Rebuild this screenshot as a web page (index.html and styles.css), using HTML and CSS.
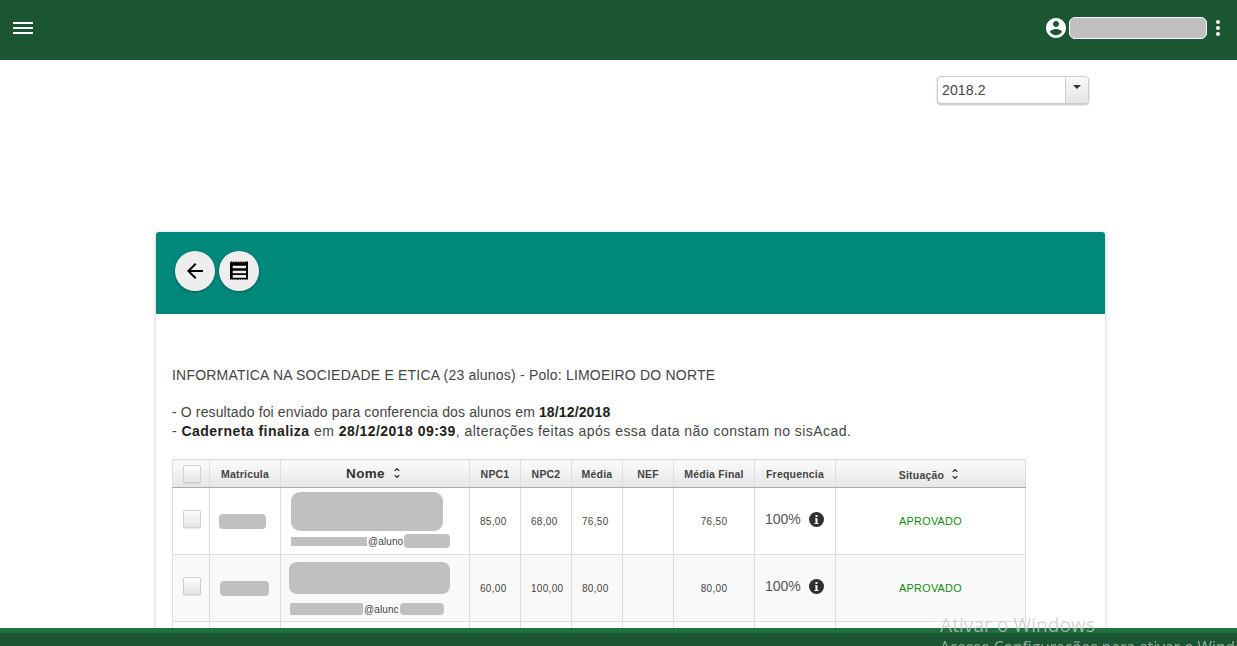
FILE: index.html
```html
<!DOCTYPE html>
<html lang="pt-BR">
<head>
<meta charset="utf-8">
<title>Caderneta</title>
<link rel="stylesheet" href="styles.css">
</head>
<body>
<header class="topbar">
  <svg class="menu-icon" width="20" height="12" viewBox="0 0 20 12"><path fill="#fff" d="M0 0h20v2H0zM0 5h20v2H0zM0 10h20v2H0z"/></svg>
  <div class="user">
    <svg width="24" height="24" viewBox="0 0 24 24"><path fill="#fff" d="M12 2C6.48 2 2 6.48 2 12s4.48 10 10 10 10-4.48 10-10S17.52 2 12 2zm0 3c1.66 0 3 1.34 3 3s-1.34 3-3 3-3-1.34-3-3 1.34-3 3-3zm0 14.2c-2.5 0-4.71-1.28-6-3.22.03-1.99 4-3.08 6-3.08 1.99 0 5.97 1.09 6 3.08-1.29 1.94-3.5 3.22-6 3.22z"/></svg>
    <span class="user-blob"></span>
    <svg width="24" height="24" viewBox="0 0 24 24"><path fill="#fff" d="M12 8c1.1 0 2-.9 2-2s-.9-2-2-2-2 .9-2 2 .9 2 2 2zm0 2c-1.1 0-2 .9-2 2s.9 2 2 2 2-.9 2-2-.9-2-2-2zm0 6c-1.1 0-2 .9-2 2s.9 2 2 2 2-.9 2-2-.9-2-2-2z"/></svg>
  </div>
</header>

<main class="page">
  <div class="period-row">
    <div class="select">
      <span class="select-value">2018.2</span>
      <span class="select-btn"><i class="caret"></i></span>
    </div>
  </div>

  <section class="card">
    <div class="card-head">
      <button class="fab" type="button" aria-label="Voltar">
        <svg width="24" height="24" viewBox="0 0 24 24"><path d="M20 11H7.83l5.59-5.59L12 4l-8 8 8 8 1.41-1.41L7.83 13H20v-2z"/></svg>
      </button>
      <button class="fab" type="button" aria-label="Caderneta">
        <svg width="24" height="24" viewBox="0 0 24 24"><path d="M3 3.2h.9v-.6h1.2v.6h1.2v-.6h1.2v.6h1.2v-.6h1.2v.6h1.2v-.6h1.2v.6h1.2v-.6h1.2v.6h1.2v-.6h1.2v.6h1.2v-.6H21v18.2h-.9v-.6h-1.2v.6h-1.2v-.6h-1.2v.6h-1.2v-.6h-1.2v.6h-1.2v-.6h-1.2v.6H9.5v-.6H8.3v.6H7.100v-.6H5.900v.6H4.700v-.6H3.500v.6H3z"/><path fill="#eee" d="M5.700 6.700H19v2.600H5.700zM5.700 11.700H19v2.600H5.700zM5.700 16H19v2.700H5.700z"/></svg>
      </button>
    </div>

    <div class="card-body">
      <p class="title">INFORMATICA NA SOCIEDADE E ETICA (23 alunos) - Polo: LIMOEIRO DO NORTE</p>
      <p class="notes">- O resultado foi enviado para conferencia dos alunos em <b>18/12/2018</b><br><span class="wide">- <b>Caderneta finaliza</b> em <b>28/12/2018 09:39</b>, alterações feitas após essa data não constam no sisAcad.</span></p>

      <table class="grades">
        <colgroup>
          <col class="c-check"><col class="c-mat"><col class="c-name"><col class="c-n"><col class="c-n"><col class="c-n"><col class="c-n"><col class="c-final"><col class="c-freq"><col class="c-sit">
        </colgroup>
        <thead>
          <tr>
            <th><span class="check"></span></th>
            <th>Matricula</th>
            <th class="th-name">Nome <svg class="sort" width="14" height="14" viewBox="0 0 24 24"><path d="M12 5.83L15.17 9l1.41-1.41L12 3 7.41 7.59 8.83 9 12 5.83zm0 12.34L8.83 15l-1.41 1.41L12 21l4.59-4.59L15.17 15 12 18.17z"/></svg></th>
            <th>NPC1</th>
            <th>NPC2</th>
            <th>Média</th>
            <th>NEF</th>
            <th>Média Final</th>
            <th>Frequencia</th>
            <th>Situação <svg class="sort" width="14" height="14" viewBox="0 0 24 24"><path d="M12 5.83L15.17 9l1.41-1.41L12 3 7.41 7.59 8.83 9 12 5.83zm0 12.34L8.83 15l-1.41 1.41L12 21l4.59-4.59L15.17 15 12 18.17z"/></svg></th>
          </tr>
        </thead>
        <tbody>
          <tr>
            <td class="center"><span class="check row-check"></span></td>
            <td><span class="blob mat-a"></span></td>
            <td class="name">
              <span class="blob name-a"></span>
              <span class="email email-a"><span class="blob em-a1"></span>@aluno<span class="blob em-a2"></span></span>
            </td>
            <td>85,00</td><td>68,00</td><td>76,50</td><td></td>
            <td class="center">76,50</td>
            <td><span class="freq">100% <svg class="info" width="15" height="15" viewBox="0 0 15 15"><circle cx="7.5" cy="7.5" r="7.5" fill="#2f2f2f"/><path fill="#fff" d="M6.5 3h2v2h-2zM6 6.300h2.500V11H9.500v1h-4v-1h1V7.300H6z"/></svg></span></td>
            <td class="center ok">APROVADO</td>
          </tr>
          <tr class="alt">
            <td class="center"><span class="check row-check"></span></td>
            <td><span class="blob mat-b"></span></td>
            <td class="name">
              <span class="blob name-b"></span>
              <span class="email email-b"><span class="blob em-b1"></span>@alunc<span class="blob em-b2"></span></span>
            </td>
            <td>60,00</td><td>100,00</td><td>80,00</td><td></td>
            <td class="center">80,00</td>
            <td><span class="freq">100% <svg class="info" width="15" height="15" viewBox="0 0 15 15"><circle cx="7.5" cy="7.5" r="7.5" fill="#2f2f2f"/><path fill="#fff" d="M6.5 3h2v2h-2zM6 6.300h2.500V11H9.500v1h-4v-1h1V7.300H6z"/></svg></span></td>
            <td class="center ok">APROVADO</td>
          </tr>
          <tr>
            <td></td><td></td><td></td><td></td><td></td><td></td><td></td><td></td><td></td><td></td>
          </tr>
        </tbody>
      </table>
    </div>
  </section>
</main>

<footer class="footer"></footer>

<div class="watermark">
  <div class="wm-title">Ativar o Windows</div>
  <div class="wm-sub">Acesse Configurações para ativar o Windows.</div>
</div>
</body>
</html>
```

FILE: styles.css
```css
* { box-sizing: border-box; }

html, body {
  margin: 0;
  height: 100%;
  overflow: hidden;
  background: #fff;
  font-family: "Liberation Sans", Arial, sans-serif;
  color: #333;
}

.topbar {
  height: 60px;
  background: #1a5632;
  display: flex;
  align-items: center;
  justify-content: space-between;
  padding: 0 7px 0 13px;
}

.menu-icon { display: block; margin-top: -4px; }

.user { display: flex; align-items: center; margin-top: -4px; }

.user-blob {
  width: 138px;
  height: 22px;
  margin: 0 -1px 0 1px;
  background: #c0c0c0;
  border: 1px solid #fff;
  border-radius: 6px;
}

.page { display: block; }

.period-row {
  display: flex;
  justify-content: flex-end;
  padding: 16px 148px 0 0;
  height: 172px;
}

.select {
  width: 152px;
  height: 28px;
  display: flex;
  background: #fff;
  border: 1px solid #ccc;
  border-radius: 4px;
  box-shadow: 0 1px 2px rgba(0,0,0,.25);
}

.select-value {
  flex: 1;
  font-size: 14px;
  line-height: 26px;
  padding-left: 4px;
  letter-spacing: .15px;
  color: #444;
}

.select-btn {
  width: 23px;
  display: flex;
  justify-content: center;
  padding-top: 8px;
  border-left: 1px solid #ccc;
  border-radius: 0 3px 3px 0;
  background: linear-gradient(#fafafa, #e4e4e4);
}

.caret {
  width: 0;
  height: 0;
  border-left: 4px solid transparent;
  border-right: 4px solid transparent;
  border-top: 4px solid #333;
}

.card {
  width: 949px;
  margin-left: 156px;
  background: #fff;
  border-radius: 3px 3px 0 0;
  box-shadow: 0 1px 4px rgba(0,0,0,.22);
}

.card-head {
  height: 82px;
  background: #00897b;
  border-radius: 3px 3px 0 0;
  display: flex;
  gap: 4px;
  padding: 19px 0 0 19px;
}

.fab {
  width: 40px;
  height: 40px;
  padding: 0;
  border: 0;
  border-radius: 50%;
  background: #eee;
  display: flex;
  align-items: center;
  justify-content: center;
  box-shadow: 0 1px 3px rgba(0,0,0,.35);
}

.card-body { padding: 52px 16px 0; }

.title, .notes {
  margin: 0;
  font-size: 14px;
  line-height: 19px;
  letter-spacing: .2px;
  color: #444;
}

.notes { margin-top: 18px; letter-spacing: .13px; }
.notes b { color: #222; }
.wide { letter-spacing: .46px; }

.grades {
  margin-top: 18px;
  width: 854px;
  table-layout: fixed;
  border-collapse: collapse;
  font-size: 10px;
  color: #444;
}

.c-check { width: 37px; }
.c-mat { width: 71px; }
.c-name { width: 189px; }
.c-n { width: 51px; }
.c-final { width: 81px; }
.c-freq { width: 81px; }
.c-sit { width: 190px; }

.grades th, .grades td { border: 1px solid #ddd; }

.grades th {
  height: 28px;
  padding: 0;
  font-size: 10.5px;
  font-weight: bold;
  color: #444;
  letter-spacing: .2px;
  text-align: center;
  background: linear-gradient(#fbfbfb, #e6e6e6);
  border-bottom: 1px solid #aaa;
}

.grades .th-name { font-size: 13.5px; letter-spacing: .3px; color: #333; }

.sort { vertical-align: -2px; margin-left: 1px; fill: #222; }

.grades td {
  height: 67px;
  padding: 0 0 0 10px;
  letter-spacing: .3px;
  vertical-align: middle;
}

.grades .center { padding-left: 0; text-align: center; }
.grades .name { padding: 0; vertical-align: top; }

.alt td { background: #f9f9f9; }

.check {
  display: inline-block;
  width: 18px;
  height: 18px;
  margin-left: 1px;
  vertical-align: middle;
  border: 1px solid #d0d0d0;
  border-radius: 2px;
  background: linear-gradient(#fcfcfc, #e5e5e5);
  box-shadow: 0 1px 1px rgba(0,0,0,.1);
}

.row-check { margin-top: -4px; }

.blob {
  display: block;
  background: #c0c0c0;
  border-radius: 4px;
}

.grades td > .mat-a { width: 47px; height: 15px; margin-left: -1px; }
.grades td > .mat-b { width: 49px; height: 15px; }

.name-a { width: 152px; height: 39px; margin: 4px 0 0 10px; border-radius: 9px; }
.name-b { width: 161px; height: 32px; margin: 7px 0 0 8px; border-radius: 8px; }

.email { display: flex; align-items: center; font-size: 10px; color: #444; letter-spacing: .1px; }
.email-a { margin: 3px 0 0 10px; height: 14px; }
.email-b { margin: 8px 0 0 9px; height: 14px; }

.em-a1 { width: 76px; height: 9px; margin-right: 1px; border-radius: 0; }
.em-a2 { width: 46px; height: 14px; margin-left: 1px; }
.em-b1 { width: 73px; height: 12px; margin-right: 1px; border-radius: 2px; }
.em-b2 { width: 44px; height: 12px; margin-left: 1px; }

.freq {
  display: inline-flex;
  align-items: center;
  gap: 7px;
  margin: -4px 0 0 0;
  font-size: 14px;
  letter-spacing: 0;
  color: #555;
}

.info { display: block; margin-left: 1px; }

.ok { font-size: 10.8px; letter-spacing: -.02px; color: #0d8a0d; }

.footer {
  position: fixed;
  left: 0;
  right: 0;
  bottom: 0;
  height: 18px;
  background: #1a5632;
  border-top: 5px solid #20713f;
}

.watermark {
  position: fixed;
  left: 940px;
  top: 611px;
  color: rgba(200,200,200,.75);
  white-space: nowrap;
  pointer-events: none;
}

.wm-title { font-family: "Open Sans", sans-serif; font-size: 19.2px; line-height: 27px; }
.wm-sub { font-family: "Open Sans", sans-serif; font-size: 15.6px; line-height: 20px; margin-top: -1px; }
```
